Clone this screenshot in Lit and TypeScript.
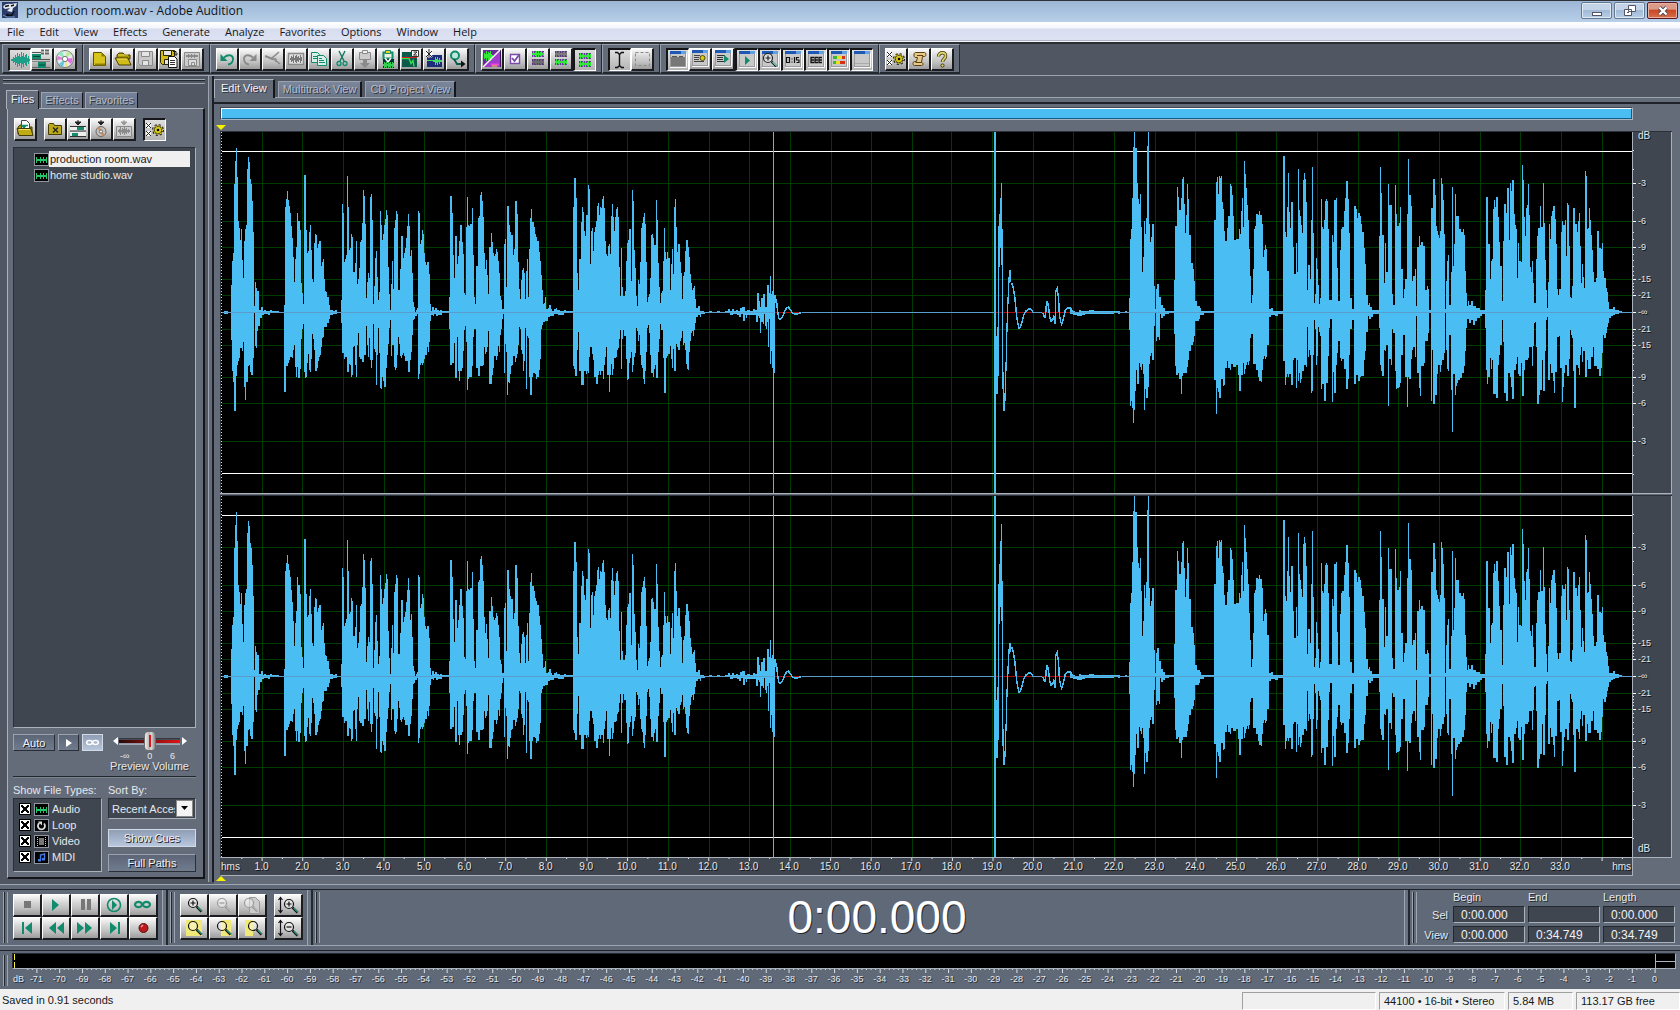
import { LitElement, html, svg, css, nothing } from "lit";
import { customElement, property } from "lit/decorators.js";

/* ------------------------------------------------------------------ */
/* Waveform data: "x y" steps. y is in thirds of a pixel, with the     */
/* zero line at BASE; x is in the unit given by the clip's scale.      */
/* ------------------------------------------------------------------ */

interface Clip {
  start: number;
  scale: number;
  top: string;
  bottom: string;
}

const BASE = 606;
const WIDTH = 1412;
const HEIGHT = 361;

const CLIPS: Clip[] = [
  {
    start: -11,
    scale: 3,
    top: `33 605 42 603 54 605 63 525 66 453 69 429 72 222 75 153 78 114 81 201 84 333 87 354 90 390 93 357 96 450 99 504 102 393 105 357 108 345 111 177 114 141 117 156 120 207 123 222 126 273 129 366 132 588 135 516 138 534 141 543 147 600 153 591 159 603 162 600 168 603 180 600 186 604 198 603 207 605 222 585 225 291 228 267 231 243 234 270 237 288 240 309 243 348 246 384 249 441 252 516 255 447 258 411 261 309 264 333 270 360 273 519 276 549 279 582 282 195 288 360 291 429 294 423 297 366 300 345 303 420 306 507 309 516 312 399 315 372 318 375 321 414 324 402 327 393 333 468 336 456 339 447 342 507 345 543 348 546 351 561 357 585 360 600 369 603 375 600 381 605 393 570 396 282 399 309 402 456 405 447 408 435 411 198 414 291 417 420 420 414 423 372 426 381 429 486 435 459 438 393 441 522 444 507 447 474 450 396 453 390 456 339 459 240 462 258 465 342 468 564 471 516 474 489 477 504 480 261 483 252 486 330 489 582 492 528 495 444 498 423 501 501 504 570 507 546 510 303 513 345 516 390 519 372 522 345 525 327 528 300 531 315 534 471 537 552 540 600 543 522 546 453 549 537 552 354 555 330 558 303 561 312 564 540 570 477 573 378 579 444 582 429 585 414 588 384 591 348 594 312 597 348 600 438 603 420 606 489 609 576 612 591 615 607 618 600 621 594 624 303 627 309 630 402 633 390 636 360 639 372 642 429 645 456 648 465 651 456 657 492 660 582 663 603 666 591 672 600 675 594 681 600 687 603 690 600 696 604 717 561 720 258 726 309 729 435 732 504 735 378 741 462 744 438 747 393 750 345 756 396 759 432 762 549 765 555 768 351 771 261 774 345 777 348 780 342 786 294 789 435 792 561 795 582 798 468 804 324 807 318 810 255 813 246 816 273 819 321 822 429 825 477 828 450 831 495 834 552 837 411 843 369 846 396 849 429 852 438 855 432 858 417 861 426 864 453 867 489 870 558 873 570 876 597 882 402 885 387 888 531 891 288 897 345 900 366 903 375 909 435 912 417 915 273 921 312 924 456 927 537 930 567 933 510 936 480 939 474 942 489 945 567 948 483 951 447 954 561 957 417 960 324 963 297 966 336 972 351 975 372 978 381 981 393 987 426 990 453 993 495 996 540 999 582 1002 579 1005 561 1008 597 1014 594 1017 585 1023 597 1026 603 1032 597 1038 594 1041 600 1050 603 1062 600 1068 604 1089 291 1092 204 1098 264 1101 489 1104 540 1107 447 1113 336 1116 291 1119 306 1122 363 1125 378 1128 315 1134 225 1137 237 1140 462 1143 363 1146 354 1149 423 1152 366 1155 351 1158 333 1161 288 1164 279 1167 315 1170 291 1173 294 1176 267 1179 258 1182 294 1185 393 1188 432 1191 438 1194 408 1197 402 1200 432 1203 318 1206 282 1209 321 1212 363 1215 321 1218 297 1221 291 1224 321 1227 471 1230 558 1233 414 1236 531 1239 558 1245 543 1248 453 1251 399 1254 390 1257 357 1263 513 1266 240 1269 273 1272 420 1275 474 1278 558 1281 588 1284 510 1287 522 1290 456 1293 354 1296 339 1299 321 1302 309 1305 342 1308 456 1311 576 1314 561 1317 552 1320 504 1323 375 1326 372 1329 384 1332 405 1338 270 1341 330 1344 459 1347 531 1350 579 1353 549 1356 543 1359 453 1362 354 1365 426 1368 447 1371 426 1374 444 1380 540 1383 462 1386 417 1389 492 1392 291 1395 267 1398 351 1401 426 1404 402 1410 456 1413 489 1416 567 1419 498 1422 486 1425 423 1428 390 1434 411 1437 441 1440 492 1443 519 1446 540 1449 534 1452 528 1455 567 1458 594 1464 588 1470 603 1482 605 1520 607`,
    bottom: `33 609 42 611 54 609 63 690 66 783 69 816 72 903 78 798 81 765 84 753 87 744 90 714 96 723 99 696 102 831 105 870 108 816 114 768 117 765 120 786 123 795 126 795 129 744 132 609 135 708 138 714 141 663 144 648 150 624 156 615 162 611 174 615 180 609 222 846 228 768 234 759 237 750 240 741 246 744 249 720 252 705 255 771 258 801 261 771 264 804 270 777 273 687 276 657 279 642 282 786 285 804 288 801 291 759 294 732 297 780 300 786 303 747 306 672 309 687 312 720 315 783 321 774 324 753 327 741 330 735 333 711 336 684 339 681 342 651 351 639 357 627 360 615 369 612 381 609 393 639 396 729 402 747 405 741 411 786 417 762 420 765 423 801 426 795 429 711 432 708 435 765 438 801 441 705 444 669 447 741 450 747 456 756 462 735 468 648 471 705 474 741 477 684 480 750 483 774 486 750 489 642 492 717 495 726 498 825 501 735 504 654 507 729 510 834 513 837 516 801 519 813 522 831 528 774 531 735 534 702 537 654 540 630 543 738 546 705 549 705 552 771 555 780 558 774 561 735 564 681 567 702 570 738 573 744 576 735 579 729 582 738 585 753 594 786 600 750 603 726 606 675 609 630 612 627 615 618 621 612 624 807 627 792 630 765 633 759 636 765 639 759 642 747 645 735 651 711 654 726 657 696 660 633 663 615 669 618 672 612 678 618 684 614 696 609 717 657 720 765 726 759 732 699 735 804 741 681 744 783 747 813 750 783 756 774 759 723 762 660 765 648 768 696 771 840 774 807 777 801 786 768 789 681 792 657 798 774 804 798 810 768 819 765 822 711 825 732 828 726 831 711 834 663 837 822 846 795 849 774 852 738 858 750 861 738 864 708 867 726 870 675 873 657 876 627 879 612 882 789 885 702 888 726 891 855 894 816 897 819 900 792 903 768 906 765 909 738 915 756 918 744 921 732 924 705 927 651 930 657 933 720 936 732 939 783 942 753 945 654 948 837 951 678 954 684 957 801 960 855 966 801 969 789 975 792 978 807 981 801 987 780 990 747 993 657 996 645 999 636 1005 633 1014 621 1020 618 1032 613 1044 614 1062 609 1089 768 1092 777 1095 798 1101 720 1104 666 1107 783 1113 825 1122 783 1128 792 1131 783 1134 789 1137 741 1140 711 1146 732 1149 750 1152 801 1158 822 1164 795 1167 783 1170 795 1173 783 1179 807 1182 765 1185 741 1188 711 1191 795 1197 846 1200 795 1203 762 1206 795 1209 777 1212 744 1218 741 1221 720 1224 714 1227 687 1230 660 1233 777 1236 687 1239 660 1242 678 1248 747 1251 810 1254 807 1257 759 1260 744 1263 726 1266 786 1269 765 1272 741 1275 729 1278 654 1281 663 1284 693 1287 675 1290 735 1293 765 1296 774 1299 807 1302 822 1305 783 1308 726 1311 654 1314 645 1317 669 1320 735 1323 789 1329 801 1332 777 1335 765 1338 804 1344 726 1347 687 1350 642 1353 660 1359 744 1362 849 1368 744 1371 738 1374 732 1380 708 1383 747 1386 774 1389 717 1392 783 1398 702 1401 711 1404 720 1410 693 1413 684 1416 663 1419 705 1422 699 1425 720 1428 762 1431 777 1434 780 1437 726 1440 693 1443 669 1446 663 1449 678 1452 660 1455 639 1458 621 1464 615 1470 618 1473 612 1482 609 1520 607`,
  },
  {
    start: 479,
    scale: 3,
    top: `0 604 10 606 28 604 36 606 50 604 60 606 75 603 85 598 91 604 97 598 103 603 108 600 115 603 121 595 127 591 136 603 142 600 150 603 160 598 166 600 171 549 177 573 180 591 183 564 189 552 195 591 201 525 207 549 210 498 213 552 216 543 219 543 222 576 225 607`,
    bottom: `0 620 3 612 15 609 50 610 91 614 100 613 112 616 118 620 124 612 130 633 136 615 139 624 142 615 162 616 168 636 174 618 177 624 180 669 183 636 189 641 192 612 195 648 198 657 201 636 204 711 207 627 210 762 213 723 216 774 222 789 225 607`,
  },
  {
    start: 479,
    scale: 3,
    top: `1114 601 1120 603 1128 606 1140 600 1146 603 1170 600 1184 603 1246 606 1258 603 1264 606 1278 603 1284 606 1290 607`,
    bottom: `1114 611 1122 614 1134 617 1150 614 1158 612 1246 609 1258 611 1264 609 1290 607`,
  },
  {
    start: 889,
    scale: 2.746,
    top: `0 604 28 606 55 564 58 387 61 357 63 264 66 111 72 114 77 219 80 267 82 282 85 252 88 351 91 486 94 441 96 333 99 372 102 324 105 108 110 342 113 396 116 381 118 342 124 528 127 597 130 537 133 522 136 540 138 561 143 585 149 594 154 603 165 604 179 510 182 348 187 231 190 261 193 300 198 264 201 207 204 201 206 282 209 369 212 315 215 222 217 267 220 375 226 459 231 477 234 513 237 573 242 588 250 594 253 603 275 604 289 330 294 216 297 201 300 252 303 198 306 204 308 198 311 276 314 297 317 363 319 393 325 354 328 318 331 246 333 222 336 228 339 255 341 318 344 390 350 387 353 414 355 387 358 357 361 372 363 303 366 264 369 351 371 153 374 192 377 234 380 285 382 330 385 417 388 498 391 579 394 555 396 477 399 357 402 348 405 312 410 315 413 303 416 315 421 342 424 441 427 420 429 405 432 417 435 483 438 531 440 597 446 594 449 603 470 604 479 138 484 366 487 381 490 291 492 189 495 306 498 354 501 276 506 411 509 492 514 399 517 486 520 177 523 300 525 318 528 345 531 369 534 210 536 189 539 207 542 276 545 540 547 465 553 507 556 330 558 171 561 369 564 579 567 552 569 444 572 477 575 525 578 582 580 564 583 267 586 351 589 357 591 330 594 273 597 267 600 273 602 357 605 570 611 516 613 375 616 396 619 270 622 285 624 264 627 474 630 573 633 510 635 420 638 357 641 351 644 303 647 264 650 237 652 213 655 267 658 309 660 369 663 564 666 597 674 288 677 264 679 297 682 324 685 309 688 306 690 318 693 342 696 366 699 378 701 414 704 462 707 555 710 585 715 579 718 591 723 600 742 378 745 171 748 249 751 375 754 519 759 399 762 486 765 459 767 222 770 285 776 510 778 552 781 585 784 225 787 162 789 312 792 348 795 339 798 291 801 282 803 477 806 564 809 537 814 507 817 312 820 147 825 255 828 288 831 408 833 513 836 498 839 477 842 588 845 423 847 411 850 378 853 405 858 396 861 408 867 432 869 540 872 528 875 537 878 600 883 294 889 423 891 207 894 255 897 348 900 363 903 375 905 384 908 363 911 204 914 222 917 270 919 372 922 597 925 513 927 453 930 435 933 429 935 585 938 486 941 231 944 468 946 402 949 252 954 318 960 357 966 366 971 357 974 375 977 483 980 549 983 588 985 573 988 585 993 573 999 588 1007 594 1018 600 1032 540 1034 261 1040 294 1042 402 1045 507 1048 453 1051 447 1054 297 1056 270 1059 291 1062 261 1067 321 1070 396 1073 420 1075 468 1078 573 1081 393 1084 282 1089 309 1092 234 1098 390 1100 219 1103 243 1106 210 1111 312 1114 345 1117 357 1120 504 1122 399 1125 453 1130 456 1133 165 1136 210 1139 321 1141 378 1144 294 1147 285 1150 222 1152 315 1155 471 1158 486 1161 453 1163 519 1166 579 1172 447 1175 378 1178 354 1183 288 1186 351 1191 219 1194 339 1197 450 1200 540 1202 594 1205 516 1208 342 1211 387 1213 318 1216 303 1219 288 1224 327 1227 402 1230 537 1233 555 1236 537 1241 366 1244 333 1247 345 1252 330 1255 438 1257 279 1260 285 1263 408 1266 561 1269 564 1271 528 1274 294 1279 342 1285 366 1287 333 1290 309 1293 408 1296 519 1299 462 1301 501 1304 534 1307 183 1310 198 1312 357 1315 354 1318 294 1320 330 1323 375 1326 420 1328 486 1331 516 1337 504 1340 363 1345 414 1350 417 1353 399 1356 483 1359 504 1364 534 1367 546 1370 576 1373 597 1384 591 1389 600 1400 603 1408 605 1437 607`,
    bottom: `0 609 55 660 58 888 61 873 63 894 66 939 69 900 72 843 74 780 77 822 83 759 85 771 88 780 91 762 94 792 96 900 99 837 102 864 107 831 110 762 113 738 116 729 118 750 124 648 127 609 130 693 133 681 136 690 140 612 143 624 149 618 154 612 165 609 179 672 182 768 184 795 190 789 193 807 198 852 201 798 204 789 215 771 217 750 220 723 226 705 231 696 234 678 237 633 248 627 251 615 262 609 289 810 294 912 297 834 300 846 303 864 308 807 314 828 317 825 319 774 325 753 328 774 331 780 336 762 341 771 350 765 355 795 358 843 363 795 369 759 372 792 374 777 377 765 380 756 383 765 385 753 388 684 391 672 396 762 405 780 410 801 413 813 418 816 421 780 424 747 427 738 429 747 432 741 435 705 438 654 440 621 446 615 457 618 465 612 479 753 482 789 484 825 487 801 490 792 492 801 495 792 501 825 506 750 509 744 514 834 517 750 520 813 523 789 525 819 528 807 531 783 536 765 542 771 545 651 547 741 550 720 553 735 556 849 558 843 561 735 564 630 567 657 569 765 572 738 575 651 578 666 580 678 583 837 586 822 591 873 597 819 602 738 605 654 608 627 611 771 613 876 616 786 619 849 622 840 624 765 627 729 630 693 635 744 638 753 641 747 644 777 650 837 655 807 658 771 660 735 663 657 666 630 674 822 679 795 685 813 688 801 693 798 699 783 701 750 704 723 707 666 710 618 715 627 720 621 726 612 742 654 745 765 748 783 751 798 754 720 759 723 762 705 767 888 770 747 773 765 776 693 778 657 781 669 784 783 787 888 789 837 792 834 795 831 798 819 801 735 806 675 809 666 811 675 814 801 817 891 820 801 825 807 828 747 831 720 836 711 839 741 842 618 845 843 847 789 850 834 853 858 856 816 858 768 864 759 867 750 869 693 875 669 878 640 880 609 883 873 886 720 889 882 894 855 900 792 903 765 908 786 911 765 914 750 919 729 922 609 925 720 928 777 930 783 935 675 938 840 941 966 944 792 949 855 952 828 955 819 957 810 963 804 969 789 974 768 977 723 980 654 983 627 988 639 993 630 999 645 1004 633 1010 624 1018 618 1024 612 1032 654 1034 780 1037 822 1042 801 1045 744 1048 777 1051 750 1054 852 1062 864 1067 765 1070 735 1075 705 1078 630 1081 696 1084 849 1089 873 1095 789 1100 801 1103 831 1106 867 1111 780 1117 762 1120 741 1122 792 1125 798 1130 759 1133 858 1139 780 1141 750 1150 744 1152 711 1161 768 1163 708 1166 639 1169 636 1172 711 1175 882 1180 855 1183 840 1188 750 1191 843 1197 723 1200 630 1202 621 1205 810 1211 762 1213 789 1219 813 1222 849 1224 786 1230 681 1236 678 1239 774 1244 876 1246 831 1249 789 1252 765 1257 798 1263 747 1265 660 1268 675 1271 684 1274 783 1276 894 1282 765 1287 774 1290 795 1293 735 1296 711 1299 756 1301 723 1307 801 1312 750 1315 777 1323 741 1328 711 1331 768 1340 777 1345 798 1350 774 1353 729 1356 675 1359 684 1364 669 1367 651 1370 639 1373 624 1379 618 1384 615 1389 612 1400 609 1437 607`,
  },
];

/* Columns of the loud transient after the long pause, per channel: x, top, bottom. */
const TRANSIENTS = [
  [
    [891, 678, 852], [894, 651, 852], [897, 348, 798], [900, 312, 471], [903, 264, 414],
    [906, 219, 465], [909, 357, 837], [912, 786, 903], [915, 850, 903], [918, 756, 873],
    [921, 639, 783], [924, 561, 666], [927, 501, 582], [930, 480, 519], [933, 480, 516],
  ],
  [
    [891, 678, 852], [894, 640, 852], [897, 330, 798], [900, 270, 450], [903, 200, 400],
    [906, 150, 440], [909, 320, 815], [912, 765, 874], [915, 830, 874], [918, 750, 850],
    [921, 645, 770], [924, 575, 670], [927, 525, 600], [930, 508, 540], [933, 508, 535],
  ],
];

const TAILS = [
  "226 580 226 556 229 570 232 580 234 605 238 625 241 629 247 624 251 615 256 602 261 594 266 592 271 597 277 607 285 613 295 611 305 608",
  "936 520 939 524 942 537 946 560 949 590 952 620 955 640 959 655 963 650 968 635 973 615 980 602 990 596 997 600 1000 607",
  "1030 608 1035 622 1038 620 1040 590 1044 572 1047 590 1051 620 1055 633 1060 628 1063 620 1067 643 1069 545 1073 535 1077 560 1080 615 1084 635 1087 643 1092 625 1098 600 1104 593 1114 595 1120 607",
];

const CENTRE = 180;

function steps(clip: Clip, raw: string): number[][] {
  const n = raw.trim().split(/\s+/).map(Number);
  const out: number[][] = [];
  for (let i = 0; i < n.length; i += 2) {
    out.push([Math.round(clip.start + n[i] / clip.scale), Math.round((n[i + 1] - BASE) / 3)]);
  }
  return out;
}

function halfPath(points: number[][]): string {
  let d = `M${points[0][0]} ${CENTRE}`;
  for (let i = 0; i < points.length - 1; i++) {
    d += `V${CENTRE + points[i][1]}H${points[i + 1][0]}`;
  }
  return `${d}V${CENTRE}Z`;
}

const BODY = CLIPS.map((c) => halfPath(steps(c, c.top)) + halfPath(steps(c, c.bottom))).join("");

const WAVE_PATHS = TRANSIENTS.map(
  (columns) =>
    BODY +
    columns
      .map(([x, t, b]) => {
        const px = Math.round(479 + x / 3);
        return `M${px} ${CENTRE + Math.round((t - BASE) / 3)}h1V${CENTRE + Math.round((b - BASE) / 3)}h-1Z`;
      })
      .join("")
);

const TAIL_PATHS = TAILS.map((t) => {
  const n = t.split(" ").map(Number);
  let d = "";
  for (let i = 0; i < n.length; i += 2) {
    d += `${i ? "L" : "M"}${(479 + n[i] / 3).toFixed(1)} ${(CENTRE + (n[i + 1] - BASE) / 3).toFixed(1)}`;
  }
  return d;
});

const SECONDS = 34.749;
const range = (n: number, from = 0) => Array.from({ length: n }, (_, i) => i + from);

const GRID_X = range(34, 1).map((s) => Math.round((s * WIDTH) / SECONDS));
const DB_MARKS: [number, string][] = [
  [51, "-3"], [89, "-6"], [115, "-9"], [147, "-15"], [163, "-21"], [180, "-∞"],
  [197, "-21"], [213, "-15"], [245, "-9"], [271, "-6"], [309, "-3"],
];
const MINOR_HALF = [18, 37, 65, 78, 100, 107, 122, 128, 134, 139, 143, 151, 154, 157, 160];
const DB_MINOR = [...MINOR_HALF, ...MINOR_HALF.map((y) => 360 - y)];

/* ------------------------------------------------------------------ */
/* Icons                                                              */
/* ------------------------------------------------------------------ */

const r = (x: number, y: number, w: number, h: number, f: string) =>
  svg`<rect x=${x} y=${y} width=${w} height=${h} fill=${f}></rect>`;
const p = (d: string, fill = "none", stroke = "none", w = 1) =>
  svg`<path d=${d} fill=${fill} stroke=${stroke} stroke-width=${w}></path>`;

const bars = (x: number, mid: number, heights: number[], fill: string) =>
  svg`<g shape-rendering="crispEdges">${heights.map((h, i) => r(x + i, mid - h, 1, h * 2, fill))}</g>`;

const gear = (x: number, y: number) => svg`<g transform="translate(${x} ${y})">
  <circle r="4.4" fill="none" stroke="#000" stroke-width="3" stroke-dasharray="1.7 1.76"></circle>
  <circle r="3.9" fill="#d8c81c" stroke="#000" stroke-width=".8"></circle>
  <circle r="4.3" fill="none" stroke="#d8c81c" stroke-width="1.5" stroke-dasharray="1.4 1.97"></circle>
  <circle r="1.3" fill="#000"></circle></g>`;

const loupe = (x: number, y: number, s: string, sign: string, handle = "#2a9a80") => svg`
  <circle cx=${x} cy=${y} r="4.5" fill="#ffffff66" stroke=${s} stroke-width="1.2"></circle>
  ${p(`M${x + 3.6} ${y + 3.6}l5 5`, "none", s, 2.4)}
  ${p(`M${x + 4.6} ${y + 4}l4.4 4.4`, "none", handle, 1.2)}
  ${sign === "+" ? p(`M${x - 2.5} ${y}h5M${x} ${y - 2.5}v5`, "none", s, 1.2) : nothing}
  ${sign === "-" ? p(`M${x - 2.5} ${y}h5`, "none", s, 1.2) : nothing}`;

const frame = (body: unknown) => svg`
  ${r(2, 2, 16, 15, "#9a9a9a")}${r(3, 4, 14, 12, "#c9c9c9")}${r(2, 1, 16, 3, "#1d58b4")}${r(13, 1, 5, 3, "#5fa0e0")}
  ${body}${p("M2 17.5h16.5V3", "none", "#f8f8f8")}`;

const checks = svg`${r(1, 3, 5, 5, "#fff")}${r(1, 11, 5, 5, "#fff")}
  ${p("M1 3l5 5M6 3l-5 5M1 11l5 5M6 11l-5 5", "none", "#222", 1)}`;

const folder = svg`${p("M4 6l2-2h4l2 2h5v4H4z", "#a89400", "#443c00")}${p("M5 6h10", "none", "#f0e060")}
  ${p("M2 9h13l3 7H6z", "#d2bd18", "#443c00")}${p("M4 10h10", "none", "#f0e060")}`;

const floppy = (f: string, s: string) => svg`${p("M2.5 2.5h14v14h-12l-2-2z", f, s)}
  ${p("M5.5 2.5h8v5h-8zM6.5 11.5h6v5h-6z", "#e4e4e4", s)}`;

const G = "#8a8a8a";
const T = "#128a6c";
const CHANNEL = [1, 3, 1, 2, 3, 1, 3, 1, 2, 3, 1, 2];
const LIT = "#30e838";

const ICONS: Record<string, unknown> = {
  wave: bars(1, 10, [1, 1, 3, 2, 5, 3, 7, 4, 6, 3, 8, 4, 7, 3, 5, 6, 2, 4, 1], "#1c9e88"),
  tracks: svg`${r(0, 3, 9, 1, "#555")}${r(0, 10, 18, 1, "#555")}${r(0, 12, 18, 1, "#888")}${r(0, 18, 18, 1, "#666")}
    ${r(0, 5, 9, 5, T)}${r(6, 13, 8, 6, T)}${p("M1 7.5h7M7 16h6", "none", "#04463a")}
    ${p("M9 1.5h3M13 1.5h4M9 4.500h3M13 4.500h4", "none", "#666", 2)}`,
  disc: svg`<circle cx="10" cy="10" r="8.5" fill="#e8e8f0" stroke="#777"></circle>
    ${p("M10 10L3 5A8 8 0 017 2z", "#8ee8c0")}${p("M10 10L12 2A8 8 0 0116 5z", "#b8f090")}
    ${p("M10 10L17.5 9A8 8 0 0116 15z", "#e070e0")}${p("M10 10L8 17.8A8 8 0 014 15z", "#60c8d8")}${p("M10 10L2 11A8 8 0 013 7z", "#e878d8")}
    ${p("M10 10L13 17A8 8 0 0110 18z", "#f0e870")}
    <circle cx="10" cy="10" r="2.6" fill="#fff" stroke="#777"></circle>`,
  new: svg`${p("M3.500 3.500h8l4 4v9h-12z", "#d9c41c", "#5a5000")}${p("M11.500 3.500l4 4h-4z", "#8c7e00")}${p("M5 15.500h10", "none", "#8c7e00", 2)}`,
  open: folder,
  save: floppy("#c8c8c8", G),
  saveAs: svg`<g transform="translate(-1 -1)">${floppy("#d2bd18", "#2a2600")}</g>
    ${p("M9.500 7.500h6l2.500 2.500v8.500h-8.500z", "#fff", "#111")}${p("M11 11.500h5M11 13.500h5M11 15.500h5", "none", "#333")}
    ${p("M14 2.500h3v3m-2-1l2 2 1.500-2", "none", "#111")}`,
  saveSel: svg`${p("M2.500 3.500h15v14h-15z", "#ccc", G)}${bars(4, 7, [1, 1, 2, 1, 1, 2, 1, 1, 2, 1, 1, 1], G)}
    ${p("M6.500 10.500h8v6h-8zM9.500 13.500h3v3h-3z", "#ddd", G)}`,
  undo: svg`${p("M7 8.500c5-4 9-2 9 1.500s-2 5-5 5.500", "none", T, 1.800)}${p("M3.500 5v7h7z", T)}`,
  redo: svg`${p("M13 8.500c-5-4-9-2-9 1.500s2 5 5 5.500", "none", G, 1.800)}${p("M16.500 5v7h-7z", G)}`,
  repeat: svg`${p("M16 3l-7 6c-2 1-4-2-7-2M2 7.500c4 0 5 3 8 3 3-2 4 1 2 2M12 11l5 4", "none", G, 1.600)}`,
  selWave: svg`${p("M2.500 4.500h15v11h-15z", "#ddd", G, 1.400)}${bars(4, 10, [1, 3, 2, 4, 1, 3, 4, 2, 3, 1, 4, 2], "#777")}`,
  copy: svg`${p("M2.500 3.500h6l2 2v8h-8z", "#d8f0e8", T)}${p("M8.500 6.500h6l3 3v7h-9z", "#d8f0e8", T)}
    ${p("M4 7.500h4M4 9.500h4M10 11.500h5M10 13.500h6M10 9.500h3", "none", T)}`,
  cut: svg`${p("M7 2l5 10M13 2L8 12", "none", "#127a62", 1.400)}
    <circle cx="7" cy="14.500" r="2" fill="none" stroke=${T} stroke-width="1.300"></circle>
    <circle cx="13" cy="14.500" r="2" fill="none" stroke=${T} stroke-width="1.300"></circle>`,
  paste: svg`${p("M4.500 3.500h11v7h-11z", "#ccc", G)}${p("M7.500 1.500h5v3h-5z", "#eee", G)}${p("M8 10h4v4h3l-5 5-5-5h3z", G)}`,
  mixPaste: svg`${p("M5.500 3.500h9v6h-9z", "#f0f0e0", T, 2)}${p("M7.500 1.500h5v3h-5z", "#e8d820", T)}${r(5, 10, 11, 9, "#033")}
    ${p("M7 9l3 4 3-4", "none", "#fff", 1.500)}${bars(5, 16, [1, 3, 2, 3, 1, 3, 2, 3, 1, 3, 2], "#2fd050")}`,
  trim: svg`${r(1, 3, 15, 15, "#0b5a4a")}${p("M1 9.500h7l2 5 2-3 1 6", "none", "#38e050", 1.400)}${p("M1 8.500h15", "none", "#d02020", 1)}
    ${p("M10.500 1.500h7v6h-7z", "#fff", "#333")}${p("M12.500 3h3.500l-3.500 3h3.500", "none", "#222")}`,
  silence: svg`${r(3, 6, 15, 12, "#1c2e78")}${bars(9, 12, [1, 1, 4, 2, 4, 1, 3, 1, 1], "#40e060")}${r(3, 11, 15, 1, "#40e060")}
    ${p("M2 2l6 6M8 2L2 8M5 0v9M1 5h8", "none", "#fff", 2)}${p("M2 2l6 6M8 2L2 8M5 0v9", "none", "#222", 1)}`,
  convert: svg`<circle cx="8" cy="6.500" r="4" fill="#bfe8dc" stroke=${T} stroke-width="2"></circle>
    ${p("M7 10l3 5h7", "none", "#0b5a48", 1.800)}${p("M14 11.500l4.500 3.500-4.500 3.500z", "#111")}`,
  views: svg`${r(1, 1, 18, 17, "#3a1858")}${p("M1 1h17L1 18z", "#6a2a9c")}${p("M18 1v17H1z", "#a23ad0")}${bars(2, 7, [3, 2, 5, 2, 4, 3, 5, 2, 1], LIT)}
    ${p("M1 18L18 1", "none", "#fff", 1.500)}${p("M9 15.500h8", "none", "#f048e0", 1.800)}${p("M10 17h5", "none", "#e8d820")}`,
  check: svg`${p("M5.500 5.500h9v9h-9z", "#fff", "#7a4ca8", 1.400)}${p("M7 9l2.500 3L14 6", "none", "#7a4ca8", 1.800)}`,
  chTop: svg`${r(4, 2, 12, 6, "#6b3aa0")}${bars(4, 5, CHANNEL, LIT)}${r(4, 10, 12, 6, "#5b3a80")}${bars(4, 13, CHANNEL, "#6c6c6c")}`,
  chBottom: svg`${r(4, 2, 12, 6, "#5b3a80")}${bars(4, 5, CHANNEL, "#7c7c7c")}${r(4, 10, 12, 6, "#6b3aa0")}${bars(4, 13, CHANNEL, LIT)}`,
  chBoth: svg`${r(4, 3, 12, 6, "#6b3aa0")}${bars(4, 6, CHANNEL, LIT)}${r(4, 11, 12, 6, "#6b3aa0")}${bars(4, 14, CHANNEL, LIT)}`,
  beam: svg`${p("M5 2.500h2.500L9.500 4.500 11.500 2.500H14M5 17.500h2.500l2-2 2 2H14M9.500 4v12", "none", "#111", 1.400)}`,
  marquee: svg`<rect x="3.500" y="3.500" width="14" height="13" fill="none" stroke="#8a8a8a" stroke-dasharray="3 2"></rect>`,
  winTool: frame(svg`${r(3, 7, 14, 9, "#777")}${p("M4 6.500h5M11 6.500h4", "none", "#555", 1)}`),
  winNote: frame(svg`${p("M4 6.500h6M4 8.500h5M4 10.500h5M4 12.500h10", "none", "#444")}<circle cx="12.500" cy="9" r="2.500" fill="#d8c81c" stroke="#554c00"></circle>`),
  winList: frame(svg`${p("M4 6.500h8M4 8.500h6M4 10.500h6M4 12.500h8", "none", "#333")}${p("M11 6v8l5-4z", T)}`),
  winPlay: frame(p("M8 6v9l5-4.500z", T)),
  winZoom: frame(loupe(8, 8, "#222", "+", "#7adcc8")),
  winTime: frame(svg`${p("M3.500 7.500h3v5h-3zM9 8.500v1M9 11.500v1M11.500 7v6M16 7.500h-2.500v2.500h2.500v2.500h-2.500", "none", "#111", 1.200)}`),
  winSel: frame(svg`${p("M8 7.500H5v5h3M5 10h3M12 7.500H9v5h3M9 10h3M16 7.500h-3v5h3M13 10h3", "none", "#111", 1.300)}`),
  winLevel: frame(svg`${r(4, 6, 8, 3, "#3cb838")}${r(8, 6, 5, 3, "#e8e020")}${r(13, 6, 3, 3, "#d83018")}
    ${r(4, 11, 8, 3, "#3cb838")}${r(7, 11, 4, 3, "#e8e020")}${r(11, 11, 5, 3, "#d83018")}`),
  winBar: frame(p("M3 13.500h14", "none", "#aaa")),
  options: svg`${checks}${gear(13, 10)}`,
  script: svg`${p("M6.500 3.500h9c2 0 2 4 0 4h-2l-1 6c2 0 2 3 0 3h-7c-2 0-2-4 0-4h2l1-4h-2c-2 0-2-5 0-5z", "#e8c888", "#5a4010")}${p("M8 6.500h6M6.500 13.500h6", "none", "#5a4010")}`,
  help: svg`${p("M6.500 7.500c0-5 8-5 7 0-.5 2.500-3 2.500-3 5.500", "none", "#3c3810", 3.400)}${p("M6.500 7.500c0-5 8-5 7 0-.5 2.500-3 2.500-3 5.500", "none", "#e0d468", 1.800)}
    <circle cx="10.500" cy="16.500" r="1.600" fill="#e0d468" stroke="#3c3810"></circle>`,
  import: svg`${p("M3 8l2-2h3l1 2h8v7H3z", "#a89400", "#443c00")}${p("M6.500 1.500h5l3 3v6h-8z", "#fff", "#444")}
    ${p("M13 6.500H9v2M9 9l-2-2.500h4z", "none", T, 1.400)}${p("M2 9.500h14l2 7H4z", "#c0ac14", "#443c00")}${p("M4 10.500h11", "none", "#f0e060")}`,
  close: svg`${p("M3.500 5.500l1-1h4l1 2h7v9h-13z", "#bca818", "#443c00")}${p("M8 8.500l5 5M13 8.500l-5 5", "none", "#222", 1.300)}`,
  insert: svg`${p("M10 1v3M7 3h6l-3 3z", "#222", "#222")}${r(2, 7, 16, 5, "#eee")}${r(2, 13, 16, 5, "#eee")}
    ${p("M2 7.500h16M2 12h16M2 17.500h16", "none", "#333")}${r(9, 8, 7, 3, T)}${r(4, 14, 6, 3, T)}`,
  insertCd: svg`${p("M10 1v3M7 3h6l-3 3z", "#222", "#222")}<circle cx="10" cy="12.500" r="5" fill="#c8c0b8" stroke="#666"></circle>
    ${p("M10 12.500l-4-3 3-2zM10 12.500l4 3-3 2z", "#c89060")}<circle cx="10" cy="12.500" r="1.600" fill="#fff" stroke="#666"></circle>`,
  insertWave: svg`${p("M10 1v3M7 3h6l-3 3z", "#999", "#999")}${p("M2.500 7.500h15v10h-15z", "#ccc", G)}${bars(4, 12, [1, 2, 4, 1, 3, 2, 4, 2, 3, 1, 2, 1], G)}`,
};

const WIDE: Record<string, unknown> = {
  stop: r(10, 6, 7, 7, "#777"),
  play: p("M9 4v12l7-6z", T),
  pause: svg`${r(9, 4, 4, 11, "#777")}${r(15, 4, 4, 11, "#777")}`,
  playTo: svg`<circle cx="13" cy="10" r="6.500" fill="none" stroke=${T} stroke-width="1.600"></circle>${p("M11 5v10l5-5z", T)}`,
  loop: svg`<ellipse cx="8.500" cy="9.500" rx="3.500" ry="2.600" fill="none" stroke=${T} stroke-width="2.200"></ellipse>
    <ellipse cx="16.500" cy="9.500" rx="3.500" ry="2.600" fill="none" stroke=${T} stroke-width="2.200"></ellipse>`,
  begin: svg`${r(8, 4, 2, 12, T)}${p("M18 4v12l-7-6z", T)}`,
  rewind: svg`${p("M13 4v12l-7-6zM21 4v12l-7-6z", T)}`,
  forward: svg`${p("M5 4v12l7-6zM13 4v12l7-6z", T)}`,
  end: svg`${r(17, 4, 2, 12, T)}${p("M9 4v12l7-6z", T)}`,
  record: svg`<circle cx="13.500" cy="10" r="4.500" fill="#b81c1c" stroke="#5c0c0c"></circle>${p("M11 9l2-2", "none", "#f0a0a0", 1.500)}`,
  zoomIn: loupe(12, 8, "#111", "+"),
  zoomOut: loupe(12, 8, "#999", "-", "#bbb"),
  zoomFull: svg`${p("M10.500 2.500h6l4 4v12h-10z", "#ccc", "#999")}${loupe(10, 8, "#999", "", "#bbb")}`,
  zoomSel: svg`${r(5, 2, 16, 16, "#f0e878")}${loupe(12, 8, "#111", "")}`,
  zoomLeft: svg`${r(11, 2, 10, 16, "#f0e878")}${loupe(12, 8, "#111", "")}`,
  zoomRight: svg`${r(6, 2, 8, 16, "#f0e878")}${loupe(14, 8, "#111", "")}`,
  vIn: svg`${p("M5.500 3v14M3.500 5l2-2.500 2 2.500M3.500 15l2 2.500 2-2.500", "none", "#111", 1.200)}${loupe(14, 9, "#111", "+")}`,
  vOut: svg`${p("M5.500 3v14M3.500 5l2-2.500 2 2.500M3.500 15l2 2.500 2-2.500", "none", "#111", 1.200)}${loupe(14, 9, "#111", "-")}`,
};

const FILE_ICONS: Record<string, unknown> = {
  audio: svg`${r(0, 0, 13, 11, "#000")}${bars(1, 6, [3, 1, 1, 1, 3, 1, 1, 3, 1, 1, 3], "#20c868")}`,
  loop: svg`${r(0, 0, 13, 11, "#000")}${p("M9 3.500A3.500 3.500 0 114.500 3", "none", "#ddd", 1.800)}${p("M3 1.500h4v4z", "#ddd")}`,
  video: svg`${r(0, 0, 13, 11, "#000")}${r(4, 2, 5, 7, "#777")}<path d="M2.500 1v9M10.500 1v9" stroke="#ccc" stroke-dasharray="1 1"></path>`,
  midi: svg`${r(0, 0, 13, 11, "#000")}${p("M5.500 8V3l4-1v5", "none", "#3c7ce0", 1.400)}${p("M3 7h3v2.500H3zM7 6h3v2.500H7z", "#3c7ce0")}`,
};

/* ------------------------------------------------------------------ */
/* Shared styles                                                      */
/* ------------------------------------------------------------------ */

const base = css`
  * {
    box-sizing: border-box;
  }
  button,
  input,
  select {
    font: inherit;
    color: inherit;
    margin: 0;
    padding: 0;
    border: 0;
    border-radius: 0;
  }
  svg {
    display: block;
  }
`;

/* ------------------------------------------------------------------ */
/* Tool button                                                        */
/* ------------------------------------------------------------------ */

@customElement("tool-button")
class ToolButton extends LitElement {
  @property() icon = "";
  @property() label = "";
  @property({ type: Boolean }) wide = false;
  @property({ type: Boolean }) pressed = false;

  static styles = [
    base,
    css`
      :host {
        display: block;
      }
      .btn {
        display: block;
        width: 23px;
        height: 23px;
        background: linear-gradient(#fafafa, #d4d4d4 40%, #c2c2c2 65%, #9c9c9c);
        border-style: solid;
        border-width: 1px 2px 2px 1px;
        border-color: #fff #1a1c20 #1a1c20 #fff;
      }
      .wide {
        width: 29px;
      }
      .pressed {
        background: linear-gradient(#dedede, #b4b4b4);
        border-width: 2px 1px 1px 2px;
        border-color: #14161a #fff #fff #14161a;
      }
    `,
  ];

  render() {
    const w = this.wide ? 26 : 20;
    return html`<button
      class="btn ${this.wide ? "wide" : ""} ${this.pressed ? "pressed" : ""}"
      aria-label=${this.label}
      aria-pressed=${this.pressed ? "true" : "false"}
    >
      <svg width=${w} height="20" viewBox="0 0 ${w} 20">${(this.wide ? WIDE : ICONS)[this.icon]}</svg>
    </button>`;
  }
}

/* ------------------------------------------------------------------ */
/* Waveform channel with its decibel scale                            */
/* ------------------------------------------------------------------ */

@customElement("wave-channel")
class WaveChannel extends LitElement {
  @property({ type: Boolean }) last = false;

  static styles = [
    base,
    css`
      :host {
        display: grid;
        grid-template-columns: minmax(0, 1fr) 40px;
        min-height: 0;
      }
      .plot {
        position: relative;
        background: #000;
        border-left: 1px solid #2b3039;
        overflow: hidden;
        min-height: 0;
      }
      .plot svg {
        position: absolute;
        width: 100%;
        height: 100%;
      }
      .cursor {
        position: absolute;
        top: 0;
        bottom: 0;
        left: 0;
        width: 1px;
        background: repeating-linear-gradient(#f8f040 0 1px, #000 1px 3px);
      }
      .scale {
        display: grid;
        grid-template-columns: 5px 1fr;
        min-height: 0;
        background: #40464f;
        border-left: 1px solid #a9b1bd;
        border-right: 1px solid #a9b1bd;
        color: #e4e6ea;
        font: 9px/9px "Liberation Sans", Arial, sans-serif;
        text-shadow: 1px 1px 0 #101216;
      }
      .scale svg {
        width: 5px;
        height: 100%;
      }
      .labels {
        display: flex;
        flex-direction: column;
        min-height: 0;
      }
      .mark {
        height: 0;
        line-height: 0;
      }
      .gap {
        flex-basis: 0;
        min-height: 0;
      }
      .unit {
        height: 9px;
        margin-bottom: -9px;
        font-size: 10px;
        line-height: 8px;
      }
      .unit.end {
        margin: -12px 0 3px;
      }
    `,
  ];

  render() {
    const marks: unknown[] = [];
    let prev = 0;
    for (const [y, text] of DB_MARKS) {
      marks.push(html`<div class="gap" style="flex-grow:${y - prev}"></div><div class="mark">${text}</div>`);
      prev = y;
    }
    return html`
      <div class="plot">
        <svg viewBox="0 0 ${WIDTH} ${HEIGHT}" preserveAspectRatio="none" shape-rendering="crispEdges">
          ${GRID_X.map((x) => r(x, 0, 1, HEIGHT, "#003c00"))}
          ${DB_MARKS.filter(([y]) => y !== CENTRE).map(([y]) => r(0, y, WIDTH, 1, "#003c00"))}
          ${r(0, 19, WIDTH, 1, "#fff")}${r(0, 341, WIDTH, 1, "#fff")}
          ${r(554, CENTRE, 27, 1, "#a80c0c")}${r(776, CENTRE, 75, 1, "#a80c0c")}
          <path d=${WAVE_PATHS[this.last ? 1 : 0]} fill="#4abef2"></path>
          ${TAIL_PATHS.map((d) => p(d, "none", "#4abef2", 1.5))}
          ${r(552, 0, 1, HEIGHT, "#4abef2")}${r(774, 0, 2, HEIGHT, "#4abef2")}
          ${r(914, 0, 1, 30, "#4abef2")}${r(928, 0, 1, 30, "#4abef2")}
          ${r(0, CENTRE, 553, 1, "#5a9ccc")}${r(581, CENTRE, 194, 1, "#5a9ccc")}
          ${r(812, CENTRE, 10, 1, "#5a9ccc")}${r(850, CENTRE, 562, 1, "#5a9ccc")}
        </svg>
        <div class="cursor"></div>
      </div>
      <div class="scale">
        <svg viewBox="0 0 5 ${HEIGHT}" preserveAspectRatio="none" shape-rendering="crispEdges">
          ${DB_MARKS.map(([y]) => r(0, y, 3, 1, "#fff"))}${DB_MINOR.map((y) => r(0, y, 1, 1, "#dfe2e6"))}
        </svg>
        <div class="labels">
          ${this.last ? nothing : html`<div class="unit">dB</div>`} ${marks}
          <div class="gap" style="flex-grow:${HEIGHT - prev}"></div>
          ${this.last ? html`<div class="unit end">dB</div>` : nothing}
        </div>
      </div>
    `;
  }
}

/* ------------------------------------------------------------------ */
/* Organizer panel on the left                                        */
/* ------------------------------------------------------------------ */

@customElement("organizer-panel")
class OrganizerPanel extends LitElement {
  static styles = [
    base,
    css`
      :host {
        display: flex;
        flex-direction: column;
        min-height: 0;
        padding: 2px 3px 5px 1px;
        background: #505762;
        color: #e6e8ec;
        font: 11px/14px "Liberation Sans", Arial, sans-serif;
      }
      .grip {
        height: 5px;
        margin-top: 1px;
        border-top: 1px solid #9da5b1;
        border-bottom: 1px solid #9da5b1;
        background: linear-gradient(#23272e 0 1px, #505762 1px);
      }
      .tabs {
        display: flex;
        align-items: flex-end;
        gap: 2px;
        margin: 6px 0 0 3px;
      }
      .tab {
        height: 16px;
        padding: 0 3px 1px;
        background: linear-gradient(#75809a, #6c7689);
        border: solid #99a2b0;
        border-width: 1px 1px 0;
        border-right-color: #14161a;
        color: #b4bac6;
        text-shadow: 1px 1px 0 #30353e;
      }
      .tab.on {
        height: 19px;
        margin-bottom: -1px;
        padding: 0 4px 2px;
        background: #646c7a;
        border-color: #aab2be #14161a #aab2be #aab2be;
        color: #f0f1f4;
        z-index: 1;
      }
      .panel {
        flex: 1;
        min-height: 0;
        display: flex;
        flex-direction: column;
        margin-left: 4px;
        padding: 9px 7px 5px 5px;
        background: #646c7a;
        border: 1px solid #aab2be;
        border-right: 2px solid #14161a;
        border-bottom: 2px solid #14161a;
      }
      .tools {
        display: flex;
        margin: 0 0 6px 1px;
      }
      .apart {
        margin-left: 7px;
      }
      .inset {
        margin: 0;
        background: #40464f;
        border: 1px solid #2b3038;
        border-right-color: #aab2be;
        border-bottom-color: #aab2be;
      }
      .files {
        flex: 1;
        min-height: 0;
        list-style: none;
        padding: 3px 5px 3px 20px;
      }
      .file {
        display: flex;
        align-items: center;
        height: 16px;
      }
      .chip {
        flex: none;
        border: 1px solid #8f969f;
        width: 15px;
        height: 13px;
      }
      .name {
        flex: 1;
        padding-left: 1px;
        line-height: 16px;
      }
      .name.on {
        background: #f0f0f0;
        color: #202226;
      }
      .preview {
        display: flex;
        margin-top: 6px;
        height: 39px;
        align-items: flex-start;
        gap: 3px;
      }
      .flat {
        height: 17px;
        background: linear-gradient(#5c6677, #707b8e);
        border: 1px solid #99a3b2;
        border-right-color: #2a2f37;
        border-bottom-color: #2a2f37;
        color: #f0f1f4;
        text-shadow: 1px 1px 0 #14161a;
        display: flex;
        align-items: center;
        justify-content: center;
      }
      .auto {
        width: 42px;
      }
      .sq {
        width: 21px;
      }
      .lit {
        background: linear-gradient(#8f9db5, #b9c7dd);
        border-color: #d2dae6;
      }
      .vol {
        width: 77px;
        display: grid;
        grid-template-columns: 8px 1fr 8px;
        align-items: center;
        justify-items: center;
        margin: -3px 0 0 5px;
      }
      .ticks {
        grid-column: 1 / 4;
        justify-self: stretch;
        display: flex;
        justify-content: space-between;
        padding: 0 13px 0 9px;
        height: 10px;
        font-size: 9px;
        line-height: 10px;
      }
      .cap {
        grid-column: 1 / 4;
        white-space: nowrap;
        line-height: 11px;
        text-shadow: 1px 1px 0 #30353e;
      }
      .range {
        appearance: none;
        width: 100%;
        height: 20px;
        background: linear-gradient(90deg, #28080a, #e01414) center / 100% 3px no-repeat, linear-gradient(#2b3038, #aab2be) center / 100% 7px no-repeat;
      }
      .range::-webkit-slider-thumb {
        appearance: none;
        width: 12px;
        height: 20px;
        border-radius: 4px;
        border: 1px solid #6c6c6c;
        background: linear-gradient(#e01414, #e01414) center / 2px 12px no-repeat, linear-gradient(90deg, #eee, #b4b4b4 45%, #ddd 60%, #888);
      }
      .rule {
        height: 2px;
        margin: 3px 0 5px;
        background: linear-gradient(#23272e 0 1px, #7a8392 1px);
      }
      .foot {
        display: grid;
        grid-template-columns: 89px 1fr;
        column-gap: 6px;
      }
      .head {
        line-height: 15px;
        white-space: nowrap;
      }
      .types {
        height: 74px;
        padding: 2px 0 0 5px;
      }
      .type {
        display: flex;
        align-items: center;
        gap: 3px;
        height: 16px;
      }
      .tick {
        appearance: none;
        width: 12px;
        height: 12px;
        border: 1px solid #000;
        background: linear-gradient(45deg, transparent 42%, #000 42% 58%, transparent 58%) center / 8px 8px no-repeat,
          linear-gradient(135deg, transparent 42%, #000 42% 58%, transparent 58%) center / 8px 8px no-repeat, #fff;
      }
      .side {
        display: flex;
        flex-direction: column;
        justify-content: space-between;
        height: 74px;
      }
      .pick {
        display: grid;
        grid-template-columns: 1fr 20px;
        height: 21px;
        margin-bottom: 3px;
      }
      .select {
        appearance: none;
        grid-row: 1;
        grid-column: 1 / 3;
        min-width: 0;
        width: 100%;
        padding: 0 20px 0 3px;
        background: none;
        text-overflow: clip;
      }
      .arrow {
        grid-row: 1;
        grid-column: 2;
        pointer-events: none;
        margin: 1px 2px 1px 1px;
        background: #f4f4f4;
        border: 1px solid #8a8a8a;
      }
      .small {
        height: 18px;
      }
    `,
  ];

  render() {
    return html`
      <div class="grip"></div>
      <div class="tabs" role="tablist">
        <button class="tab on" role="tab" aria-selected="true">Files</button>
        <button class="tab" role="tab">Effects</button>
        <button class="tab" role="tab">Favorites</button>
      </div>
      <div class="panel">
        <div class="tools">
          <tool-button icon="import" label="Import File"></tool-button>
          <tool-button class="apart" icon="close" label="Close Files"></tool-button>
          <tool-button icon="insert" label="Insert Into Multitrack"></tool-button>
          <tool-button icon="insertCd" label="Insert Into CD Project"></tool-button>
          <tool-button icon="insertWave" label="Edit File"></tool-button>
          <tool-button class="apart" icon="options" label="Advanced Options" pressed></tool-button>
        </div>
        <ul class="inset files">
          ${["production room.wav", "home studio.wav"].map(
            (f, i) => html`<li class="file">
              <svg class="chip" viewBox="0 0 13 11">${FILE_ICONS.audio}</svg><span class="name ${i ? "" : "on"}">${f}</span>
            </li>`
          )}
        </ul>
        <div class="preview">
          <button class="flat auto">Auto</button>
          <button class="flat sq" aria-label="Play">
            <svg width="10" height="10"><path d="M2 1v8l6-4z" fill="#fff" /></svg>
          </button>
          <button class="flat sq lit" aria-label="Loop">
            <svg width="15" height="9">
              <ellipse cx="4.500" cy="4.500" rx="2.800" ry="2" fill="none" stroke="#fff" stroke-width="1.500" />
              <ellipse cx="10.500" cy="4.500" rx="2.800" ry="2" fill="none" stroke="#fff" stroke-width="1.500" />
            </svg>
          </button>
          <div class="vol">
            <svg width="5" height="8"><path d="M5 0v8L0 4z" fill="#fff" /></svg>
            <input class="range" id="vol" type="range" min="0" max="100" value="52" />
            <svg width="5" height="8"><path d="M0 0v8l5-4z" fill="#fff" /></svg>
            <div class="ticks"><span>-∞</span><span>0</span><span>6</span></div>
            <label class="cap" for="vol">Preview Volume</label>
          </div>
        </div>
        <div class="rule"></div>
        <div class="foot">
          <div class="head">Show File Types:</div>
          <label class="head" for="sort">Sort By:</label>
          <div class="inset types">
            ${["Audio", "Loop", "Video", "MIDI"].map(
              (t) => html`<label class="type">
                <input class="tick" type="checkbox" checked />
                <svg class="chip" viewBox="0 0 13 11">${FILE_ICONS[t.toLowerCase()]}</svg>${t}
              </label>`
            )}
          </div>
          <div class="side">
            <div class="inset pick">
              <select class="select" id="sort">
                <option>Recent Access</option>
              </select>
              <span class="arrow"><svg width="15" height="15"><path d="M4 5h7l-3.500 4z" fill="#000" /></svg></span>
            </div>
            <button class="flat small lit">Show Cues</button>
            <button class="flat small">Full Paths</button>
          </div>
        </div>
      </div>
    `;
  }
}

/* ------------------------------------------------------------------ */
/* Application shell                                                  */
/* ------------------------------------------------------------------ */

const MENUS = ["File", "Edit", "View", "Effects", "Generate", "Analyze", "Favorites", "Options", "Window", "Help"];

/* A trailing "!" marks a button that is held down. */
const TOOLBARS = [
  "wave! tracks disc",
  "new open save saveAs saveSel",
  "undo redo repeat selWave copy cut paste mixPaste trim silence convert",
  "views check chTop chBottom chBoth!",
  "beam! marquee",
  "winTool! winNote winList winPlay! winZoom! winTime! winSel! winLevel! winBar!",
  "options script help",
];

@customElement("app-root")
class AppRoot extends LitElement {
  static styles = [
    base,
    css`
      :host {
        display: grid;
        grid-template-rows: 22px 22px 32px minmax(0, 1fr) 61px 44px 21px;
        height: 100vh;
        background: #505762;
        color: #e6e8ec;
        font: 11px/14px "Liberation Sans", Arial, sans-serif;
        overflow: hidden;
      }
      .title {
        display: flex;
        align-items: flex-start;
        gap: 2px;
        padding: 1px 2px 0 2px;
        background: linear-gradient(#9cb6d6, #b7cfe8);
        border-top: 1px solid #2f3338;
        color: #101418;
        font: 12px/18px "Open Sans", sans-serif;
      }
      .caption {
        flex: 1;
        padding-left: 6px;
      }
      .win {
        width: 31px;
        height: 17px;
        display: grid;
        place-items: center;
        background: linear-gradient(#c3d4e8 45%, #9fb9d6 46%, #b8cee6);
        border: 1px solid #66788f;
        border-radius: 2px;
        box-shadow: inset 0 0 0 1px #dfe9f4;
      }
      .win.x {
        background: linear-gradient(#dc9a88 42%, #c84420 46%, #d8704c);
        border-color: #5c1620;
        box-shadow: inset 0 0 0 1px #e8b0a0;
      }
      .menu {
        display: flex;
        gap: 15px;
        padding: 0 7px;
        background: linear-gradient(#fff, #f2f5fb 30%, #d7ddef 35%, #dfe4f4);
        border-bottom: 2px solid #2b2f35;
        box-shadow: inset 0 -1px 0 #f4f4f4, inset 0 -2px 0 #b0b4c4;
      }
      .entry {
        background: none;
        color: #15181c;
        font: 11px/18px "Open Sans", sans-serif;
      }
      .bars {
        display: flex;
        padding-left: 2px;
        border-bottom: 1px solid #9da5b1;
        align-items: flex-start;
      }
      .bar {
        display: flex;
        height: 30px;
        padding: 3px 5px;
        background: #646c7a;
        border: 1px solid #97a0ad;
        border-right: 1px solid #23272e;
        border-bottom: 2px solid #23272e;
      }
      .main {
        display: grid;
        grid-template-columns: 206px 6px minmax(0, 1fr);
        padding-left: 2px;
        min-height: 0;
      }
      .split {
        background: #646c7a;
        border-left: 1px solid #9da5b1;
        border-right: 2px solid #1c2026;
        margin-bottom: 2px;
      }
      .edit {
        display: flex;
        flex-direction: column;
        min-height: 0;
        min-width: 0;
        background: #646c7a;
      }
      .tabs {
        display: flex;
        align-items: flex-end;
        gap: 3px;
        height: 22px;
        background: #505762;
        border-bottom: 1px solid #9da5b1;
      }
      .tab {
        height: 16px;
        padding: 0 4px;
        background: linear-gradient(#7b869a, #6c7689);
        border: solid #99a2b0;
        border-width: 1px 2px 0 1px;
        border-right-color: #14161a;
        color: #b8bdc8;
        line-height: 15px;
        text-shadow: 1px 1px 0 #30353e;
      }
      .tab.on {
        height: 19px;
        margin-bottom: -1px;
        padding: 0 6px 1px;
        background: #646c7a;
        border-color: #aab2be #14161a #aab2be #aab2be;
        color: #f2f3f5;
      }
      .stage {
        flex: 1;
        min-height: 0;
        display: flex;
        flex-direction: column;
        margin-top: 4px;
        padding: 3px 8px 3px 6px;
        border-top: 2px solid #1f2329;
      }
      .scroll {
        height: 13px;
        margin-right: 39px;
        border: 1px solid #40464f;
        border-bottom-color: #aab2be;
        border-right-color: #aab2be;
      }
      .thumb {
        display: block;
        width: 100%;
        height: 11px;
        background: #4abef2;
        border: 1px solid #fff;
        border-right-color: #0b5f88;
        border-bottom-color: #0b5f88;
      }
      .marker {
        display: block;
        margin-left: -4px;
      }
      .head {
        height: 11px;
        padding-top: 5px;
      }
      .waves {
        flex: 1;
        min-height: 0;
        display: flex;
        flex-direction: column;
        border-top: 1px solid #2b3039;
      }
      .wave {
        flex: 1;
      }
      .divider {
        height: 3px;
        background: linear-gradient(#aab2be 0 1px, #646c7a 1px 2px, #2b3039 2px);
      }
      .time {
        display: grid;
        grid-template-columns: minmax(0, 1fr) 39px;
        height: 19px;
      }
      .ruler {
        border: 1px solid #aab2be;
        border-left-color: #40464f;
        background: #40464f;
      }
      .ruler svg {
        width: 100%;
        height: 3px;
      }
      .nums {
        display: flex;
        font: 10px/12px "Liberation Sans", Arial, sans-serif;
        text-shadow: 1px 1px 0 #101216;
        text-align: center;
      }
      .num {
        flex-basis: 0;
        min-width: 0;
      }
      .num.first {
        text-align: left;
      }
      .num.final {
        text-align: right;
        padding-right: 1px;
      }
      .corner {
        height: 1px;
        background: #aab2be;
      }
      .deck {
        display: flex;
        padding: 5px 1px 0;
        background: #606978;
        border-top: 1px solid #9da5b1;
        box-shadow: inset 0 4px 0 #606978, inset 0 5px 0 #1f2329;
      }
      .grip {
        flex: none;
        width: 5px;
        margin: 2px 2px;
        border: solid #9da5b1;
        border-width: 0 1px;
        background: linear-gradient(90deg, #23272e 0 1px, #606978 1px);
      }
      .edge {
        flex: none;
        width: 6px;
        border-left: 1px solid #9da5b1;
        border-right: 2px solid #23272e;
        background: #6a7382;
      }
      .pads {
        display: grid;
        grid-template-columns: repeat(var(--cols), 29px);
        grid-auto-rows: 23px;
        align-content: start;
        padding: 4px 4px 0 3px;
      }
      .clock {
        flex: 1;
        display: grid;
        place-items: center;
        padding: 0 0 2px 28px;
        font-size: 46px;
        line-height: 46px;
        color: #fff;
        text-shadow: 1px 1px 0 #23272e;
      }
      .stats {
        display: grid;
        grid-template-columns: 31px 72px 72px 72px;
        grid-template-rows: 13px 17px 17px;
        column-gap: 3px;
        row-gap: 3px;
        padding: 0 4px 0 0;
        text-shadow: 1px 1px 0 #23272e;
        align-items: center;
      }
      .side {
        text-align: right;
        padding-right: 2px;
      }
      .field {
        width: 72px;
        height: 17px;
        padding: 0 7px;
        background: #40464f;
        border: 1px solid #23272e;
        border-right-color: #aab2be;
        border-bottom-color: #aab2be;
        color: #f0f1f4;
        font-size: 12px;
      }
      .meter {
        display: flex;
        gap: 2px;
        padding: 7px 4px 1px 1px;
        background: #606978;
        border-top: 1px solid #9da5b1;
        box-shadow: inset 0 4px 0 #606978, inset 0 5px 0 #1f2329;
      }
      .level {
        flex: 1;
        min-width: 0;
      }
      .tube {
        display: flex;
        justify-content: space-between;
        height: 16px;
        background: #000;
        border: 1px solid #23272e;
        border-right-color: #aab2be;
        border-bottom-color: #aab2be;
      }
      .peak {
        width: 1px;
        margin-left: 1px;
        background: linear-gradient(#f8f040 0 6px, #000 6px 8px, #f8f040 8px);
      }
      .clip {
        width: 20px;
        border-left: 1px solid #aab2be;
        background: linear-gradient(transparent 7px, #aab2be 7px 8px, transparent 8px);
      }
      .scale {
        display: grid;
        grid-template-columns: 13px repeat(72, minmax(0, 1fr));
        padding-right: 10px;
        font: 9px/13px "Liberation Sans", Arial, sans-serif;
        text-align: center;
        text-shadow: 1px 1px 0 #2b3039;
      }
      .scale svg {
        grid-column: 2 / 74;
        width: 100%;
        height: 4px;
      }
      .first {
        grid-column: 1;
        grid-row: 2;
      }
      .status {
        display: flex;
        gap: 3px;
        padding: 3px 0 0;
        background: #f0f0f0;
        color: #15181c;
        line-height: 17px;
      }
      .msg {
        flex: 1;
        padding-left: 2px;
      }
      .cell {
        border: 1px solid #a0a0a0;
        border-right-color: #fff;
        border-bottom-color: #fff;
        padding-left: 4px;
        white-space: pre;
      }
      .c1 {
        width: 134px;
      }
      .c2 {
        width: 126px;
      }
      .c3 {
        width: 65px;
      }
      .c4 {
        width: 104px;
      }
    `,
  ];

  private pads(cols: number, names: string) {
    return html`<div class="pads" style="--cols:${cols}">
      ${names.split(" ").map((n) => html`<tool-button wide icon=${n} label=${n}></tool-button>`)}
    </div>`;
  }

  private row(label: string, values: string[]) {
    return html`<span class="side">${label}</span>${values.map(
        (v, i) => html`<input class="field" aria-label="${label} ${["Begin", "End", "Length"][i]}" .value=${v} />`
      )}`;
  }

  render() {
    return html`
      <header class="title">
        <svg width="16" height="16" viewBox="0 0 16 16">
          <rect width="16" height="16" fill="#2c3c68" />
          <path d="M1 5c1-3 5-4 8-3l6-1-1 3-3 2-1 4-5-1 3-3-5 1z" fill="#e4e9f0" />
          <path d="M3 4.500l4-1M9 4l3-1" stroke="#10131c" stroke-width="1.600" />
          <path d="M5 12c3 2 6 1 7-3l-2 5H4z" fill="#0a0e18" stroke="#0a0e18" />
          <path d="M1 13l4 2h8" stroke="#7d95c8" fill="none" />
        </svg>
        <span class="caption">production room.wav - Adobe Audition</span>
        <button class="win" aria-label="Minimize">
          <svg width="12" height="12"><rect x="1.500" y="7.500" width="9" height="3" fill="#fff" stroke="#556" /></svg>
        </button>
        <button class="win" aria-label="Restore">
          <svg width="12" height="11">
            <path d="M4.500 .5h7v6h-7zM.5 4.500h7v6h-7zM3 7.500h2" fill="#fff" stroke="#556" />
          </svg>
        </button>
        <button class="win x" aria-label="Close">
          <svg width="12" height="10">
            <path d="M2.500 1.500l7 7M9.500 1.500l-7 7" stroke="#445" stroke-width="4" />
            <path d="M2.500 1.500l7 7M9.500 1.500l-7 7" stroke="#fff" stroke-width="2.400" />
          </svg>
        </button>
      </header>

      <nav class="menu">${MENUS.map((m) => html`<button class="entry">${m}</button>`)}</nav>

      <div class="bars">
        ${TOOLBARS.map(
          (t) => html`<div class="bar" role="toolbar">
            ${t.split(" ").map((n) => {
              const name = n.replace("!", "");
              return html`<tool-button icon=${name} label=${name} ?pressed=${n.endsWith("!")}></tool-button>`;
            })}
          </div>`
        )}
      </div>

      <main class="main">
        <organizer-panel></organizer-panel>
        <div class="split"></div>
        <section class="edit">
          <div class="tabs" role="tablist">
            <button class="tab on" role="tab" aria-selected="true">Edit View</button>
            <button class="tab" role="tab">Multitrack View</button>
            <button class="tab" role="tab">CD Project View</button>
          </div>
          <div class="stage">
            <div class="scroll"><button class="thumb" aria-label="Visible range"></button></div>
            <div class="head">
              <svg class="marker" width="10" height="6"><path d="M0 0h10L5 5z" fill="#f8f000" /></svg>
            </div>
            <div class="waves">
              <wave-channel class="wave"></wave-channel>
              <div class="divider"></div>
              <wave-channel class="wave" last></wave-channel>
            </div>
            <div class="time">
              <div class="ruler">
                <svg>
                  ${range(69, 1).map((h) => {
                    const x = `${((h / 2 / SECONDS) * 100).toFixed(3)}%`;
                    return svg`<rect x=${x} width="1" height=${h % 2 ? 1 : 3} fill="#e4e6ea"></rect>`;
                  })}
                </svg>
                <div class="nums">
                  <span class="num first" style="flex-grow:0.5">hms</span>
                  ${range(33, 1).map((s) => html`<span class="num" style="flex-grow:1">${s}.0</span>`)}
                  <span class="num final" style="flex-grow:1.249">hms</span>
                </div>
              </div>
              <div class="corner"></div>
            </div>
            <svg class="marker" width="10" height="5"><path d="M0 5h10L5 0z" fill="#f8f000" /></svg>
          </div>
        </section>
      </main>

      <section class="deck">
        <div class="grip"></div>
        ${this.pads(5, "stop play pause playTo loop begin rewind forward end record")}
        <div class="edge"></div>
        <div class="grip"></div>
        ${this.pads(3, "zoomIn zoomOut zoomFull zoomSel zoomLeft zoomRight")}${this.pads(1, "vIn vOut")}
        <div class="edge"></div>
        <div class="grip"></div>
        <div class="clock">0:00.000</div>
        <div class="edge"></div>
        <div class="grip"></div>
        <div class="stats">
          <span></span><span>Begin</span><span>End</span><span>Length</span>
          ${this.row("Sel", ["0:00.000", "", "0:00.000"])} ${this.row("View", ["0:00.000", "0:34.749", "0:34.749"])}
        </div>
      </section>

      <section class="meter">
        <div class="grip"></div>
        <div class="level">
          <div class="tube"><div class="peak"></div><div class="clip"></div></div>
          <div class="scale">
            <svg>
              ${range(716).map((i) => {
                const x = `${((i / 720) * 100).toFixed(3)}%`;
                const major = i % 10 === 5;
                return i % 2
                  ? svg`<rect x=${x} width="1" height=${major ? 4 : 1} fill="#dfe2e6"></rect>`
                  : nothing;
              })}
            </svg>
            <span class="first">dB</span>${range(72).map((i) => html`<span>${i === 71 ? "0" : `-${71 - i}`}</span>`)}
          </div>
        </div>
      </section>

      <footer class="status">
        <span class="msg">Saved in 0.91 seconds</span>
        <span class="cell c1"></span>
        <span class="cell c2">44100 • 16-bit • Stereo</span>
        <span class="cell c3">5.84 MB</span>
        <span class="cell c4">113.17 GB free</span>
      </footer>
    `;
  }
}
